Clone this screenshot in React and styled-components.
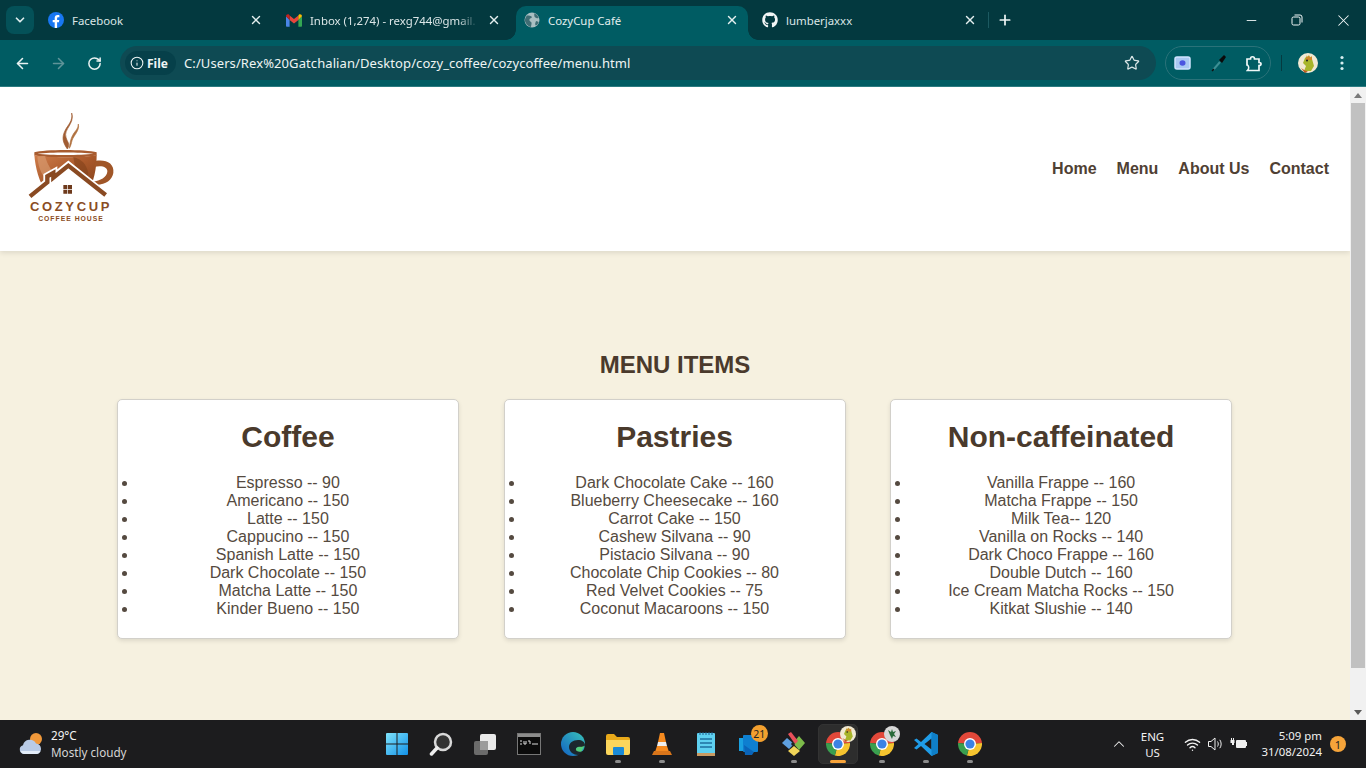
import React from "react";
import styled, { createGlobalStyle } from "styled-components";
import { ArrowLeft, ArrowRight, RotateCw, Info, Star, X, Plus, ChevronDown, ChevronUp, Minus, Wifi } from "lucide-react";
import { FaGithub } from "react-icons/fa";

const Global = createGlobalStyle`
  html, body { margin: 0; padding: 0; height: 768px; overflow: hidden; background: #fff; }
  * { box-sizing: border-box; }
`;

const Screen = styled.div`
  width: 1366px; height: 768px; display: flex; flex-direction: column; overflow: hidden;
  font-family: "Noto Sans", sans-serif;
`;

/* browser chrome */
const TabStrip = styled.div`
  height: 40px; background: #03393f; display: flex; align-items: flex-start; padding-left: 6px; flex: none;
`;
const TabMenu = styled.button`
  width: 28px; height: 28px; margin: 6px 2px 0 0; border: 0; border-radius: 8px; background: #045158; color: #dcebec;
  display: flex; align-items: center; justify-content: center; padding: 0;
`;
const Tab = styled.div`
  width: 238px; height: 34px; margin-top: 6px; display: flex; align-items: center; padding: 0 10px 6px 12px; position: relative;
  color: ${p => (p.$active ? "#e4efef" : "#dbe6e7")}; font-size: 11.4px; gap: 8px;
  &::before {
    content: ""; position: absolute; z-index: 0; inset: 0 2px 0 4px; border-radius: 10px 10px 0 0;
    background: ${p => (p.$active ? "#005c63" : "transparent")};
  }
  & > * { position: relative; z-index: 1; }
`;
const Flare = styled.i`
  position: absolute !important; bottom: 0; width: 10px; height: 10px;
  ${p => (p.$side === "left" ? "left: -6px;" : "right: -8px;")}
  background: radial-gradient(circle at ${p => (p.$side === "left" ? "0 0" : "100% 0")}, transparent 9.5px, #005c63 10px);
`;
const Favicon = styled.span`
  width: 16px; height: 16px; flex: none; display: flex; align-items: center; justify-content: center;
`;
const TabTitle = styled.span`
  flex: 1; white-space: nowrap;
  ${p => p.$fade && "-webkit-mask-image: linear-gradient(to right, #000 88%, transparent);"}
`;
const TabClose = styled.span`
  width: 16px; display: flex; justify-content: center; color: #e4efef; flex: none;
`;
const TabSep = styled.span`
  width: 1px; height: 16px; background: #1c5a61; margin-top: 12px; flex: none;
`;
const NewTab = styled.span`
  margin: 12px 0 0 8px; width: 16px; height: 16px; color: #eef5f5; display: flex;
`;
const WinControls = styled.div`
  margin-left: auto; display: flex; height: 40px;
`;
const WinBtn = styled.span`
  width: 46px; height: 40px; display: flex; align-items: center; justify-content: center; color: #f4f9f9;
`;

const Toolbar = styled.div`
  height: 47px; background: #005c63; flex: none; display: flex; align-items: flex-start; border-bottom: 1px solid #2c7d83;
  padding-top: 6px;
`;
const NavIcon = styled.span`
  width: 36px; height: 34px; display: flex; align-items: center; justify-content: center;
  color: ${p => (p.$dim ? "#5f9499" : "#e9f2f2")}; flex: none;
`;
const NavGroup = styled.div`
  display: flex; padding-left: 4px; width: 120px; flex: none;
`;
const Omnibox = styled.div`
  width: 1036px; height: 34px; border-radius: 17px; background: #0e4a53; display: flex; align-items: center;
  padding: 0 16px 0 5px; flex: none;
`;
const FilePill = styled.div`
  width: 51px; height: 24px; border-radius: 12px; background: #06404a; display: flex; align-items: center; padding-left: 5px; gap: 3px;
  color: #eef5f5; font-size: 12px; font-weight: 700; flex: none;
`;
const Url = styled.span`
  margin-left: 8px; flex: 1; color: #eef5f3; font-size: 13px; white-space: nowrap; letter-spacing: 0.09px;
`;
const ExtPill = styled.div`
  margin-left: 9px; width: 106px; height: 34px; border-radius: 17px; border: 1px solid #2a7279; display: flex; align-items: center;
  justify-content: space-between; padding: 0 7px 0 8px; flex: none;
`;
const ToolDivider = styled.span`
  width: 1px; height: 16px; background: #053a40; margin: 9px 0 0 10px; flex: none;
`;
const Avatar = styled.span`
  margin: 7px 0 0 16px; width: 20px; height: 20px; flex: none; display: flex;
`;
const Kebab = styled.span`
  margin: 9px 0 0 16px; width: 16px; height: 16px; color: #d6eef0; display: flex; flex: none;
`;

/* page */
const Viewport = styled.div`
  flex: 1; display: flex; min-height: 0; background: #f6f1e0;
`;
const Page = styled.div`
  flex: 1; min-width: 0; display: flex; flex-direction: column; background: #f6f1e0;
  font-family: "Liberation Sans", Arial, sans-serif; color: #4a3728;
`;
const Header = styled.header`
  height: 164px; flex: none; background: #fff; box-shadow: 0 2px 5px rgba(0,0,0,.1);
  display: flex; align-items: center; justify-content: space-between; padding: 0 21px 0 20px;
`;
const LogoBlock = styled.div`
  width: 100px; display: flex; flex-direction: column; align-items: center; margin-top: -3px;
`;
const LogoName = styled.span`
  font-size: 13px; font-weight: 700; letter-spacing: 2.65px; color: #8a4d24; line-height: 12px; margin-top: -1px;
  margin-right: -2px; white-space: nowrap;
`;
const LogoSub = styled.span`
  font-size: 6.8px; font-weight: 700; letter-spacing: 1px; color: #8a4d24; line-height: 8px; margin-top: 2px; margin-left: 2px; white-space: nowrap;
`;
const Nav = styled.nav`
  display: flex; gap: 20px;
`;
const NavLink = styled.a`
  font-size: 16px; font-weight: 700; color: #4f4033; text-decoration: none;
`;
const Main = styled.main`
  padding-top: 100px; display: flex; flex-direction: column; align-items: center;
`;
const MenuHeading = styled.h2`
  margin: 0 0 20px; font-size: 24px; line-height: 28px; font-weight: 700; color: #4a3a2c;
`;
const Cards = styled.div`
  display: flex; gap: 44.6px; justify-content: center; margin-left: -1px;
`;
const Card = styled.section`
  width: 342px; background: #fff; border: 1px solid #d2d0ca; border-radius: 5px; padding: 20px;
  box-shadow: 0 2px 4px rgba(0,0,0,.1); height: 240px;
`;
const CardTitle = styled.h3`
  margin: 0 0 20px; font-size: 30px; line-height: 34px; font-weight: 700; text-align: center; color: #4a3a2c;
`;
const ItemList = styled.ul`
  margin: 0; padding: 0; list-style: disc outside;
`;
const Item = styled.li`
  font-size: 16px; line-height: 18px; text-align: center; color: #554a40;
`;

const Scrollbar = styled.div`
  width: 16px; flex: none; background: #f1f1f1; display: flex; flex-direction: column; align-items: center;
`;
const ScrollArrow = styled.span`
  height: 16px; flex: none; display: flex; align-items: center; justify-content: center;
`;
const ScrollThumb = styled.span`
  width: 14px; height: 565px; background: #c1c1c1; flex: none;
`;
const ScrollSpace = styled.span` flex: 1; `;

/* taskbar */
const Taskbar = styled.div`
  height: 48px; flex: none; background: #1c1c1e; color: #f2f2f2; display: grid; grid-template-columns: 375px 1fr auto; align-items: center;
  font-size: 12px;
`;
const Weather = styled.div`
  display: flex; align-items: center; gap: 5px; padding-left: 18px;
`;
const WeatherText = styled.div`
  display: flex; flex-direction: column; line-height: 17px; font-size: 11.7px;
`;
const Dim = styled.span` color: #d5d5d5; `;
const TaskIcons = styled.div`
  display: flex; height: 48px;
`;
const TaskCell = styled.div`
  width: 44.1px; height: 48px; display: flex; align-items: center; justify-content: center; position: relative; padding-bottom: 1px;
  ${p => p.$active && `&::before { content: ""; position: absolute; left: 2px; right: 2px; top: 4px; bottom: 4px; background: #2d2d2d; border-radius: 5px; border: 1px solid #333; }`}
  & > svg { position: relative; }
`;
const RunDot = styled.i`
  position: absolute; bottom: 5px; left: 50%; height: 3px; border-radius: 2px;
  width: ${p => (p.$active ? "16px" : "6px")}; margin-left: ${p => (p.$active ? "-8px" : "-3px")};
  background: ${p => (p.$active ? "#f7a33a" : "#8c8c8c")};
`;
const CountBadge = styled.span`
  position: absolute; top: 5px; left: 23px; width: 17px; height: 17px; border-radius: 50%; background: #f3a02f; color: #222;
  font-size: 10.5px; display: flex; align-items: center; justify-content: center;
`;
const OverlayBadge = styled.span`
  position: absolute; top: 6px; right: 4px; width: 16px; height: 16px; display: flex;
`;
const Tray = styled.div`
  display: flex; align-items: center; height: 48px; padding-right: 20px;
`;
const TrayIcon = styled.span`
  display: flex; align-items: center; justify-content: center; width: ${p => p.$w || 24}px; color: #f0f0f0; flex: none;
`;
const Lang = styled.div`
  width: 45px; margin: 0 6px 0 0; padding-top: 1px; text-align: center; line-height: 16px; font-size: 11.5px;
`;
const Clock = styled.div`
  width: 68px; margin-left: 3px; text-align: right; line-height: 16px; font-size: 11.4px; white-space: nowrap;
`;
const Notif = styled.span`
  margin-left: 8px; width: 16px; height: 16px; border-radius: 50%; background: #f6a43a; color: #222; font-size: 11px;
  display: flex; align-items: center; justify-content: center;
`;

/* drawings */
const sector = (a0, a1, r = 12, c = 12) => {
  const p = a => [c + r * Math.sin((a * Math.PI) / 180), c - r * Math.cos((a * Math.PI) / 180)];
  const [x0, y0] = p(a0), [x1, y1] = p(a1);
  return `M${c} ${c}L${x0} ${y0}A${r} ${r} 0 ${a1 - a0 > 180 ? 1 : 0} 1 ${x1} ${y1}Z`;
};
const ChromeIcon = () => (
  <svg width="24" height="24" viewBox="0 0 24 24">
    <path d={sector(-85, 85)} fill="#e2483a" />
    <path d={sector(85, 195)} fill="#f6c42f" />
    <path d={sector(195, 275)} fill="#3a9f4f" />
    <circle cx="12" cy="12" r="6" fill="#fff" />
    <circle cx="12" cy="12" r="4.6" fill="#3b82e4" />
  </svg>
);
const Dino = ({ size = 20 }) => (
  <svg width={size} height={size} viewBox="0 0 20 20">
    <circle cx="10" cy="10" r="10" fill="#f1e9d2" />
    <path d="M7 5c3-3 6-2 7 1l2 7-3 5H6l2-5-3-3z" fill="#a8b52a" />
    <path d="M8 2l1 3 2-3 1 3 2-2 0 4-6 0z" fill="#d3862a" />
    <circle cx="9" cy="7.5" r="1" fill="#222" />
    <path d="M3 15c3 2 4 3 7 3l-3 2z" fill="#c05a20" />
  </svg>
);
const GmailIcon = () => (
  <svg width="16" height="13" viewBox="0 0 16 13">
    <path d="M0 2.2V11.8c0 .6.5 1 1 1H3.6V6L0 2.2z" fill="#4a86e8" />
    <path d="M12.4 12.8H15c.5 0 1-.4 1-1V2.2L12.4 6z" fill="#34a853" />
    <path d="M3.6 6V1.4L8 5l4.4-3.6V6L8 9.4z" fill="#e8453c" />
    <path d="M0 2.2C0 .6 1.8-.4 3 .6l.6.8V6z" fill="#c5221f" />
    <path d="M16 2.2c0-1.6-1.8-2.6-3-1.6l-.6.8V6z" fill="#fbbc04" />
  </svg>
);
const FacebookIcon = () => (
  <svg width="16" height="16" viewBox="0 0 16 16">
    <circle cx="8" cy="8" r="8" fill="#1877f2" />
    <path d="M10.9 10.2l.4-2.3H9.1V6.4c0-.6.3-1.2 1.3-1.2h1V3.2s-.9-.2-1.8-.2C7.800 3 6.700 4.100 6.700 6.100v1.800H4.700v2.300h2V16h2.400v-5.800z" fill="#fff" />
  </svg>
);
const GlobeIcon = () => (
  <svg width="16" height="16" viewBox="0 0 16 16">
    <circle cx="8" cy="8" r="7.500" fill="#a9bfc2" />
    <path d="M3 3.500c2 .2 4 0 5 1.500-.4 1.500-2 1-2.500 2.300C4.800 9 6.500 9.500 7.500 10.500c.3 1.500-.5 3-.5 4.500C4 14.500 1.500 11.800.9 8.500 1 6.500 2 4.800 3 3.500zM10 1.300c2.500.7 4 2.500 4.700 4.800-1.500.2-3-.2-4-1.200C10 3.800 10.500 2.500 10 1.300zM12 9c1.200.2 2 .5 2.800 1-.5 1.500-1.500 2.800-2.800 3.600-.8-.3-.8-1-.8-1.800 0-1 .6-1.800.8-2.800z" fill="#3f6d74" />
  </svg>
);
const MenuDots = () => (
  <svg width="16" height="16" viewBox="0 0 16 16" fill="currentColor">
    <circle cx="8" cy="2.500" r="1.600" /><circle cx="8" cy="8" r="1.600" /><circle cx="8" cy="13.500" r="1.600" />
  </svg>
);
const Restore = () => (
  <svg width="12" height="12" viewBox="0 0 12 12" fill="none" stroke="currentColor">
    <rect x="1" y="3" width="8" height="8" rx="1.500" /><path d="M3.500 1h5.500a2 2 0 0 1 2 2v5.500" />
  </svg>
);
const Capture = () => (
  <svg width="17" height="14" viewBox="0 0 17 14" fill="none">
    <rect x="1" y="1" width="15" height="12" rx="2" stroke="#cfe4ff" strokeWidth="1.500" fill="#a9c9f2" />
    <ellipse cx="8.500" cy="7" rx="3" ry="2.800" fill="#4a55e0" />
  </svg>
);
const Dropper = () => (
  <svg width="16" height="18" viewBox="0 0 16 18" fill="none">
    <path d="M2.500 15.500L9 8" stroke="#3d8f94" strokeWidth="2" />
    <path d="M1 17l2-2" stroke="#111" strokeWidth="1.500" />
    <path d="M8 6l3 3 4-6-2-2z" fill="#0a0a0a" />
  </svg>
);
const PuzzleOut = () => (
  <svg width="17" height="17" viewBox="0 0 17 17" fill="none" stroke="#f0f8f8" strokeWidth="1.700">
    <path d="M1 4h3.500c0-3 4-3 4 0H13v3.500c2.700 0 2.700 3 0 3V15.500H1.500c1.500-1.500 1.500-4 0-5.500H1z" />
  </svg>
);
const Speaker = () => (
  <svg width="17" height="16" viewBox="0 0 17 16" fill="none" stroke="#eee" strokeWidth="1">
    <path d="M1.500 5.500h2.500l4-3.500v12l-4-3.500H1.500z" />
    <path d="M10.500 5.500c1 1.500 1 3.500 0 5M12.800 3.800c1.800 2.500 1.800 6 0 8.400" />
  </svg>
);
const Battery = () => (
  <svg width="18" height="14" viewBox="0 0 18 14" fill="#f0f0f0">
    <path d="M1 1h1v2h1V1h1v2h.5v3H4v2H2V6H.5V3H1z" />
    <path d="M7 3h8a1 1 0 0 1 1 1v1h1v4h-1v1a1 1 0 0 1-1 1H7a1 1 0 0 1-1-1V4a1 1 0 0 1 1-1z" />
  </svg>
);
const WeatherIcon = () => (
  <svg width="28" height="26" viewBox="0 0 28 26">
    <circle cx="18" cy="8" r="6" fill="#f0983a" />
    <path d="M6 23a4.500 4.500 0 0 1-1-8.800A7 7 0 0 1 18 12.500a5.300 5.300 0 0 1 5 5.200c0 3-2 5.300-5 5.300z" fill="#b9cbe6" />
    <path d="M6 23a4.500 4.500 0 0 1-3.500-3h20c-.8 1.800-2.500 3-4.500 3z" fill="#e3edf9" />
  </svg>
);
const Win = () => (
  <svg width="24" height="24" viewBox="0 0 24 24">
    <defs><linearGradient id="w" x1="0" y1="0" x2="1" y2="1"><stop offset="0" stopColor="#7fe3fb" /><stop offset="1" stopColor="#1291e8" /></linearGradient></defs>
    <path d="M1 2a1 1 0 0 1 1-1h9.500v10.500H1zM12.500 1H22a1 1 0 0 1 1 1v9.500H12.500zM1 12.500h10.500V23H2a1 1 0 0 1-1-1zM12.500 12.500H23V22a1 1 0 0 1-1 1h-9.500z" fill="url(#w)" />
  </svg>
);
const SearchGlass = () => (
  <svg width="24" height="24" viewBox="0 0 24 24" fill="none">
    <circle cx="14" cy="10" r="8" fill="#333" stroke="#d8d8d8" strokeWidth="2.500" />
    <path d="M8 16l-5.500 6" stroke="#eee" strokeWidth="3.500" strokeLinecap="round" />
  </svg>
);
const TaskView = () => (
  <svg width="24" height="24" viewBox="0 0 24 24">
    <rect x="1" y="9" width="14" height="14" rx="2" fill="#6b6b6b" />
    <rect x="7" y="2" width="16" height="16" rx="2" fill="#e9e9e9" />
    <rect x="7" y="9" width="8" height="9" fill="#9b9b9b" />
  </svg>
);
const Terminal = () => (
  <svg width="24" height="22" viewBox="0 0 24 22">
    <rect x=".5" y=".5" width="23" height="21" fill="#0b0b0b" stroke="#777" />
    <rect x="1" y="1" width="22" height="3" fill="#8c8c8c" />
    <path d="M3 8h2M3 11h2M7 8v3h2V8M11 8h2v3M15 11h6" stroke="#ddd" fill="none" />
  </svg>
);
const Edge = () => (
  <svg width="24" height="24" viewBox="0 0 24 24">
    <defs><linearGradient id="e" x1="0" y1="1" x2="1" y2="0"><stop offset="0" stopColor="#1262c4" /><stop offset="1" stopColor="#39c2b8" /></linearGradient></defs>
    <circle cx="12" cy="12" r="12" fill="url(#e)" />
    <path d="M24 13c0-3-3-5-7-5-5 0-9 3-9 7 0 5 5 8 9 8 2 0 5-2 7-5-3 2-9 2-9-1 0-1 1-2 3-2 3 0 6 0 6-2z" fill="#1c1c1e" opacity=".9" />
    <path d="M23.500 13.500c-1 1.500-4.500 1-6.500 1.500-1.500.5-2.500 1.500-2 3 .5 1.500 3 2 5.500 1.500" fill="#5fdc6c" opacity=".8" />
  </svg>
);
const Folder = () => (
  <svg width="24" height="22" viewBox="0 0 24 22">
    <path d="M0 3a2 2 0 0 1 2-2h6l3 3h11a2 2 0 0 1 2 2v14H0z" fill="#e8a91a" />
    <path d="M0 7h24v13a2 2 0 0 1-2 2H2a2 2 0 0 1-2-2z" fill="#fbd65c" />
    <rect x="7" y="14" width="11" height="8" rx="1" fill="#1a8ad6" />
  </svg>
);
const Vlc = () => (
  <svg width="20" height="24" viewBox="0 0 20 24">
    <path d="M8 1h4l2 9H6z" fill="#f58a1f" /><path d="M6 10h8l1 4H5z" fill="#eee" /><path d="M5 14h10l2 6H3z" fill="#f58a1f" />
    <path d="M2 19h16l2 4H0z" fill="#d9751a" />
  </svg>
);
const Notes = () => (
  <svg width="18" height="24" viewBox="0 0 18 24">
    <rect y="1" width="18" height="23" rx="1" fill="#5ed0f0" />
    <rect y="21" width="18" height="3" fill="#c99a62" />
    <path d="M3 7h12M3 11h12M3 15h12" stroke="#1e6f9e" strokeWidth="1.500" />
    <path d="M3 0v3M6 0v3M9 0v3M12 0v3M15 0v3" stroke="#1e5f8e" />
  </svg>
);
const Stack = () => (
  <svg width="24" height="24" viewBox="0 0 24 24">
    <rect x="1" y="6" width="11" height="13" fill="#1aa0e0" />
    <rect x="5" y="3" width="15" height="17" rx="1" fill="#0e7fd0" />
    <path d="M6 13l10 7-2 3H7z" fill="#0a64b8" />
  </svg>
);
const GitTool = () => (
  <svg width="24" height="24" viewBox="0 0 24 24">
    <path d="M12 13L5 7 0 12l7 6z" fill="#5fa0e0" transform="translate(0 -1)" />
    <path d="M12 11l6-7 6 7-6 7z" fill="#7cbb4a" transform="translate(-1 0)" />
    <path d="M12 14l6 5-6 5-6-5z" fill="#f0d458" />
    <path d="M6 2l3-2 7 9-3 3z" fill="#e8505a" />
    <circle cx="11" cy="12" r="1.800" fill="#222" />
  </svg>
);
const VsCode = () => (
  <svg width="24" height="24" viewBox="0 0 24 24">
    <path d="M17.500 0L24 3v18l-6.500 3L7 14l-4.500 3.500L0 16l4.500-4L0 8l2.500-1.500L7 10z" fill="#1f9ce8" />
    <path d="M17.500 6.500L10.500 12l7 5.500z" fill="#1c1c1e" />
    <path d="M17.500 0L24 3v18l-6.500 3z" fill="#0f7fc8" />
  </svg>
);
const Leaf = () => (
  <svg width="16" height="16" viewBox="0 0 16 16">
    <circle cx="8" cy="8" r="8" fill="#d8d8d8" />
    <path d="M4 4l3 2 1-3 1 3 3-1-2 3 2 3-3-1-1 3-2-4z" fill="#2a6a3a" />
  </svg>
);

const CupLogo = () => (
  <svg width="100" height="90" viewBox="30 39 300 270">
    <defs>
      <linearGradient id="cup" x1="0" y1="0" x2="1" y2="1">
        <stop offset="0" stopColor="#cf7d4b" /><stop offset=".5" stopColor="#a9582a" /><stop offset="1" stopColor="#7e3f1a" />
      </linearGradient>
    </defs>
    <path d="M185 42C195 75 160 90 168 115C172 130 182 135 172 150C158 130 155 115 165 95C172 80 190 65 185 42z" fill="#a05c32" stroke="#a05c32" strokeWidth="2" />
    <path d="M205 75C210 95 190 110 186 125C184 132 183 140 178 148C180 130 182 118 190 105C196 95 205 90 205 75z" fill="#b0713f" stroke="#b0713f" strokeWidth="2" />
    <path d="M73 160c30-9 155-9 187 0v9c-30 9-157 9-187 0z" fill="#a85c30" />
    <path d="M82 164c40-5 130-5 168 0-38 5-128 5-168 0z" fill="#fff" />
    <path d="M73 168c35 9 155 9 187 0 0 40-8 80-28 118H112C86 248 76 205 73 168z" fill="url(#cup)" />
    <path d="M256 186c30-6 58 6 54 36-4 22-22 34-50 36l-12-10c24-3 42-14 44-30 2-14-18-20-40-14z" fill="#a05628" />
    <path d="M105 172c8 25 18 45 35 55-14 8-22 10-30 16C92 225 84 200 82 172z" fill="#dba077" opacity=".6" />
    <path d="M190 174c25 6 40 22 45 50l-12 30-25-32z" fill="#7d3f1a" opacity=".55" />
    <path d="M62 292L112 250V232L130 222V236L175 200L285 288V312H62z" fill="#fff" stroke="#fff" strokeWidth="24" strokeLinejoin="miter" />
    <path d="M60 292L112 250V232L130 222V236L175 200L287 288" fill="none" stroke="#8a4a22" strokeWidth="13" strokeLinejoin="miter" />
    <path d="M160 258h12v12h-12zM174 258h12v12h-12zM160 272h12v12h-12zM174 272h12v12h-12z" fill="#6e3a1c" />
  </svg>
);

const menus = [
  { title: "Coffee", items: ["Espresso -- 90", "Americano -- 150", "Latte -- 150", "Cappucino -- 150", "Spanish Latte -- 150", "Dark Chocolate -- 150", "Matcha Latte -- 150", "Kinder Bueno -- 150"] },
  { title: "Pastries", items: ["Dark Chocolate Cake -- 160", "Blueberry Cheesecake -- 160", "Carrot Cake -- 150", "Cashew Silvana -- 90", "Pistacio Silvana -- 90", "Chocolate Chip Cookies -- 80", "Red Velvet Cookies -- 75", "Coconut Macaroons -- 150"] },
  { title: "Non-caffeinated", items: ["Vanilla Frappe -- 160", "Matcha Frappe -- 150", "Milk Tea-- 120", "Vanilla on Rocks -- 140", "Dark Choco Frappe -- 160", "Double Dutch -- 160", "Ice Cream Matcha Rocks -- 150", "Kitkat Slushie -- 140"] },
];

const taskApps = [
  { key: "start", icon: <Win /> },
  { key: "search", icon: <SearchGlass /> },
  { key: "view", icon: <TaskView /> },
  { key: "term", icon: <Terminal /> },
  { key: "edge", icon: <Edge /> },
  { key: "folder", icon: <Folder />, dot: true },
  { key: "vlc", icon: <Vlc />, dot: true },
  { key: "notes", icon: <Notes /> },
  { key: "stack", icon: <Stack />, count: "21" },
  { key: "git", icon: <GitTool />, dot: true },
  { key: "chrome1", icon: <ChromeIcon />, active: true, overlay: <Dino size={16} /> },
  { key: "chrome2", icon: <ChromeIcon />, dot: true, overlay: <Leaf /> },
  { key: "code", icon: <VsCode />, dot: true },
  { key: "chrome3", icon: <ChromeIcon />, dot: true },
];

const tabs = [
  { title: "Facebook", icon: <FacebookIcon /> },
  { title: "Inbox (1,274) - rexg744@gmail.", icon: <GmailIcon />, fade: true },
  { title: "CozyCup Café", icon: <GlobeIcon />, active: true },
  { title: "lumberjaxxx", icon: <FaGithub size={16} color="#f2f6f6" /> },
];

export default function App() {
  return (
    <Screen>
      <Global />
      <TabStrip>
        <TabMenu><ChevronDown size={14} strokeWidth={3} /></TabMenu>
        {tabs.map(t => (
          <Tab key={t.title} $active={t.active}>
            {t.active && <Flare $side="left" />}
            {t.active && <Flare $side="right" />}
            <Favicon>{t.icon}</Favicon>
            <TabTitle $fade={t.fade}>{t.title}</TabTitle>
            <TabClose><X size={14} strokeWidth={2.4} /></TabClose>
          </Tab>
        ))}
        <TabSep />
        <NewTab><Plus size={16} strokeWidth={2.6} /></NewTab>
        <WinControls>
          <WinBtn><Minus size={15} strokeWidth={1.4} /></WinBtn>
          <WinBtn><Restore /></WinBtn>
          <WinBtn><X size={19} strokeWidth={1.3} /></WinBtn>
        </WinControls>
      </TabStrip>
      <Toolbar>
        <NavGroup>
          <NavIcon><ArrowLeft size={17} strokeWidth={2.2} /></NavIcon>
          <NavIcon $dim><ArrowRight size={17} strokeWidth={2.2} /></NavIcon>
          <NavIcon><RotateCw size={15} strokeWidth={2.4} /></NavIcon>
        </NavGroup>
        <Omnibox>
          <FilePill><Info size={14} strokeWidth={1.8} />File</FilePill>
          <Url>C:/Users/Rex%20Gatchalian/Desktop/cozy_coffee/cozycoffee/menu.html</Url>
          <Star size={16} color="#dbe6e7" strokeWidth={1.8} />
        </Omnibox>
        <ExtPill>
          <Capture />
          <Dropper />
          <PuzzleOut />
        </ExtPill>
        <ToolDivider />
        <Avatar><Dino /></Avatar>
        <Kebab><MenuDots /></Kebab>
      </Toolbar>
      <Viewport>
        <Page>
          <Header>
            <LogoBlock>
              <CupLogo />
              <LogoName>COZYCUP</LogoName>
              <LogoSub>COFFEE HOUSE</LogoSub>
            </LogoBlock>
            <Nav>
              {["Home", "Menu", "About Us", "Contact"].map(n => <NavLink key={n}>{n}</NavLink>)}
            </Nav>
          </Header>
          <Main>
            <MenuHeading>MENU ITEMS</MenuHeading>
            <Cards>
              {menus.map(m => (
                <Card key={m.title}>
                  <CardTitle>{m.title}</CardTitle>
                  <ItemList>
                    {m.items.map(i => <Item key={i}>{i}</Item>)}
                  </ItemList>
                </Card>
              ))}
            </Cards>
          </Main>
        </Page>
        <Scrollbar>
          <ScrollArrow><svg width="8" height="5" viewBox="0 0 8 5"><path d="M4 0l4 5H0z" fill="#7a7a7a" /></svg></ScrollArrow>
          <ScrollThumb />
          <ScrollSpace />
          <ScrollArrow><svg width="8" height="5" viewBox="0 0 8 5"><path d="M0 0h8L4 5z" fill="#5a5a5a" /></svg></ScrollArrow>
        </Scrollbar>
      </Viewport>
      <Taskbar>
        <Weather>
          <WeatherIcon />
          <WeatherText><span>29°C</span><Dim>Mostly cloudy</Dim></WeatherText>
        </Weather>
        <TaskIcons>
          {taskApps.map(a => (
            <TaskCell key={a.key} $active={a.active}>
              {a.icon}
              {a.count && <CountBadge>{a.count}</CountBadge>}
              {a.overlay && <OverlayBadge>{a.overlay}</OverlayBadge>}
              {(a.dot || a.active) && <RunDot $active={a.active} />}
            </TaskCell>
          ))}
        </TaskIcons>
        <Tray>
          <TrayIcon $w={23}><ChevronUp size={18} strokeWidth={1.4} /></TrayIcon>
          <Lang>ENG<br />US</Lang>
          <TrayIcon $w={22}><Wifi size={17} strokeWidth={2} /></TrayIcon>
          <TrayIcon $w={24}><Speaker /></TrayIcon>
          <TrayIcon $w={24}><Battery /></TrayIcon>
          <Clock>5:09 pm<br />31/08/2024</Clock>
          <Notif>1</Notif>
        </Tray>
      </Taskbar>
    </Screen>
  );
}
